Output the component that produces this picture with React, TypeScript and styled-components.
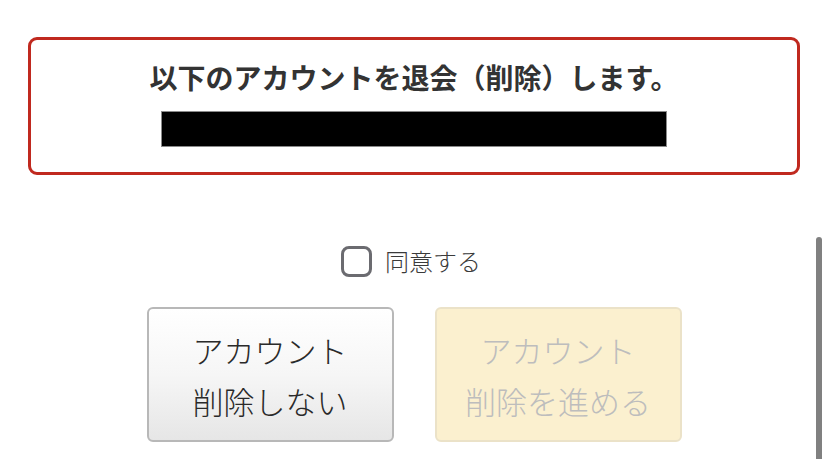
import React, { useState } from 'react';
import styled, { createGlobalStyle, css } from 'styled-components';

const GlobalStyle = createGlobalStyle`
	html, body {
		margin: 0;
		padding: 0;
		background: #fff;
	}
	body {
		font-family: 'Noto Sans CJK JP', 'Noto Sans', sans-serif;
		color: #333;
	}
`;

const PageStyled = styled.div`
	position: relative;
	width: 828px;
	height: 459px;
	overflow: hidden;
	box-sizing: border-box;
	padding: 37px 28px 0;
	display: flex;
	flex-direction: column;
	align-items: stretch;
`;

const AlertBox = styled.section`
	border: 3px solid #c0291f;
	border-radius: 9px;
	padding: 19px 0 26px;
	display: flex;
	flex-direction: column;
	align-items: center;

	h2 {
		margin: 0;
		font-size: 28px;
		line-height: 36px;
		font-weight: 700;
		color: #333;
	}
`;

const Redacted = styled.div`
	margin-top: 17px;
	width: 504px;
	height: 34px;
	background: #000;
	box-shadow: 0 0 0 1px #8a8a8a;
`;

const AgreeRow = styled.label`
	margin-top: 70px;
	align-self: center;
	display: flex;
	align-items: center;
	gap: 13px;
	cursor: pointer;
	font-size: 24px;
	font-weight: 300;
	line-height: 32px;
	color: #3a3a3a;
	padding-right: 6px;
`;

const CheckBox = styled.span<{ $checked: boolean }>`
	width: 31px;
	height: 31px;
	box-sizing: border-box;
	border: 3px solid #6b6b70;
	border-radius: 8px;
	background: ${(p) => (p.$checked ? '#6b6b70' : '#fff')};
`;

const ButtonRow = styled.div`
	margin-top: 30px;
	display: flex;
	justify-content: center;
	gap: 41px;
`;

const ActionButton = styled.button<{ $primary?: boolean }>`
	width: 247px;
	height: 135px;
	box-sizing: border-box;
	border-radius: 6px;
	font-family: inherit;
	font-size: 31px;
	font-weight: 300;
	line-height: 51px;
	padding: 0;
	display: flex;
	flex-direction: column;
	align-items: center;
	justify-content: center;
	border: 2px solid #b8b8b8;
	color: #2a2a2a;
	background: linear-gradient(to bottom, #ffffff 0%, #f6f6f6 50%, #e6e6e6 100%);

	${(p) =>
		p.$primary &&
		css`
			border-color: #ebe2c8;
			background: #fbf0cf;
			color: #bdbdbd;
			cursor: default;
		`}
`;

const ScrollThumb = styled.div`
	position: absolute;
	right: 6px;
	top: 237px;
	width: 6px;
	height: 240px;
	border-radius: 3px;
	background: #808080;
`;

export default function App(): JSX.Element {
	const [agreed, setAgreed] = useState(false);

	return (
		<PageStyled>
			<GlobalStyle />
			<AlertBox>
				<h2>以下のアカウントを退会（削除）します。</h2>
				<Redacted />
			</AlertBox>
			<AgreeRow onClick={() => setAgreed(!agreed)}>
				<CheckBox $checked={agreed} />
				同意する
			</AgreeRow>
			<ButtonRow>
				<ActionButton>
					<span>アカウント</span>
					<span>削除しない</span>
				</ActionButton>
				<ActionButton $primary disabled={!agreed}>
					<span>アカウント</span>
					<span>削除を進める</span>
				</ActionButton>
			</ButtonRow>
			<ScrollThumb />
		</PageStyled>
	);
}
